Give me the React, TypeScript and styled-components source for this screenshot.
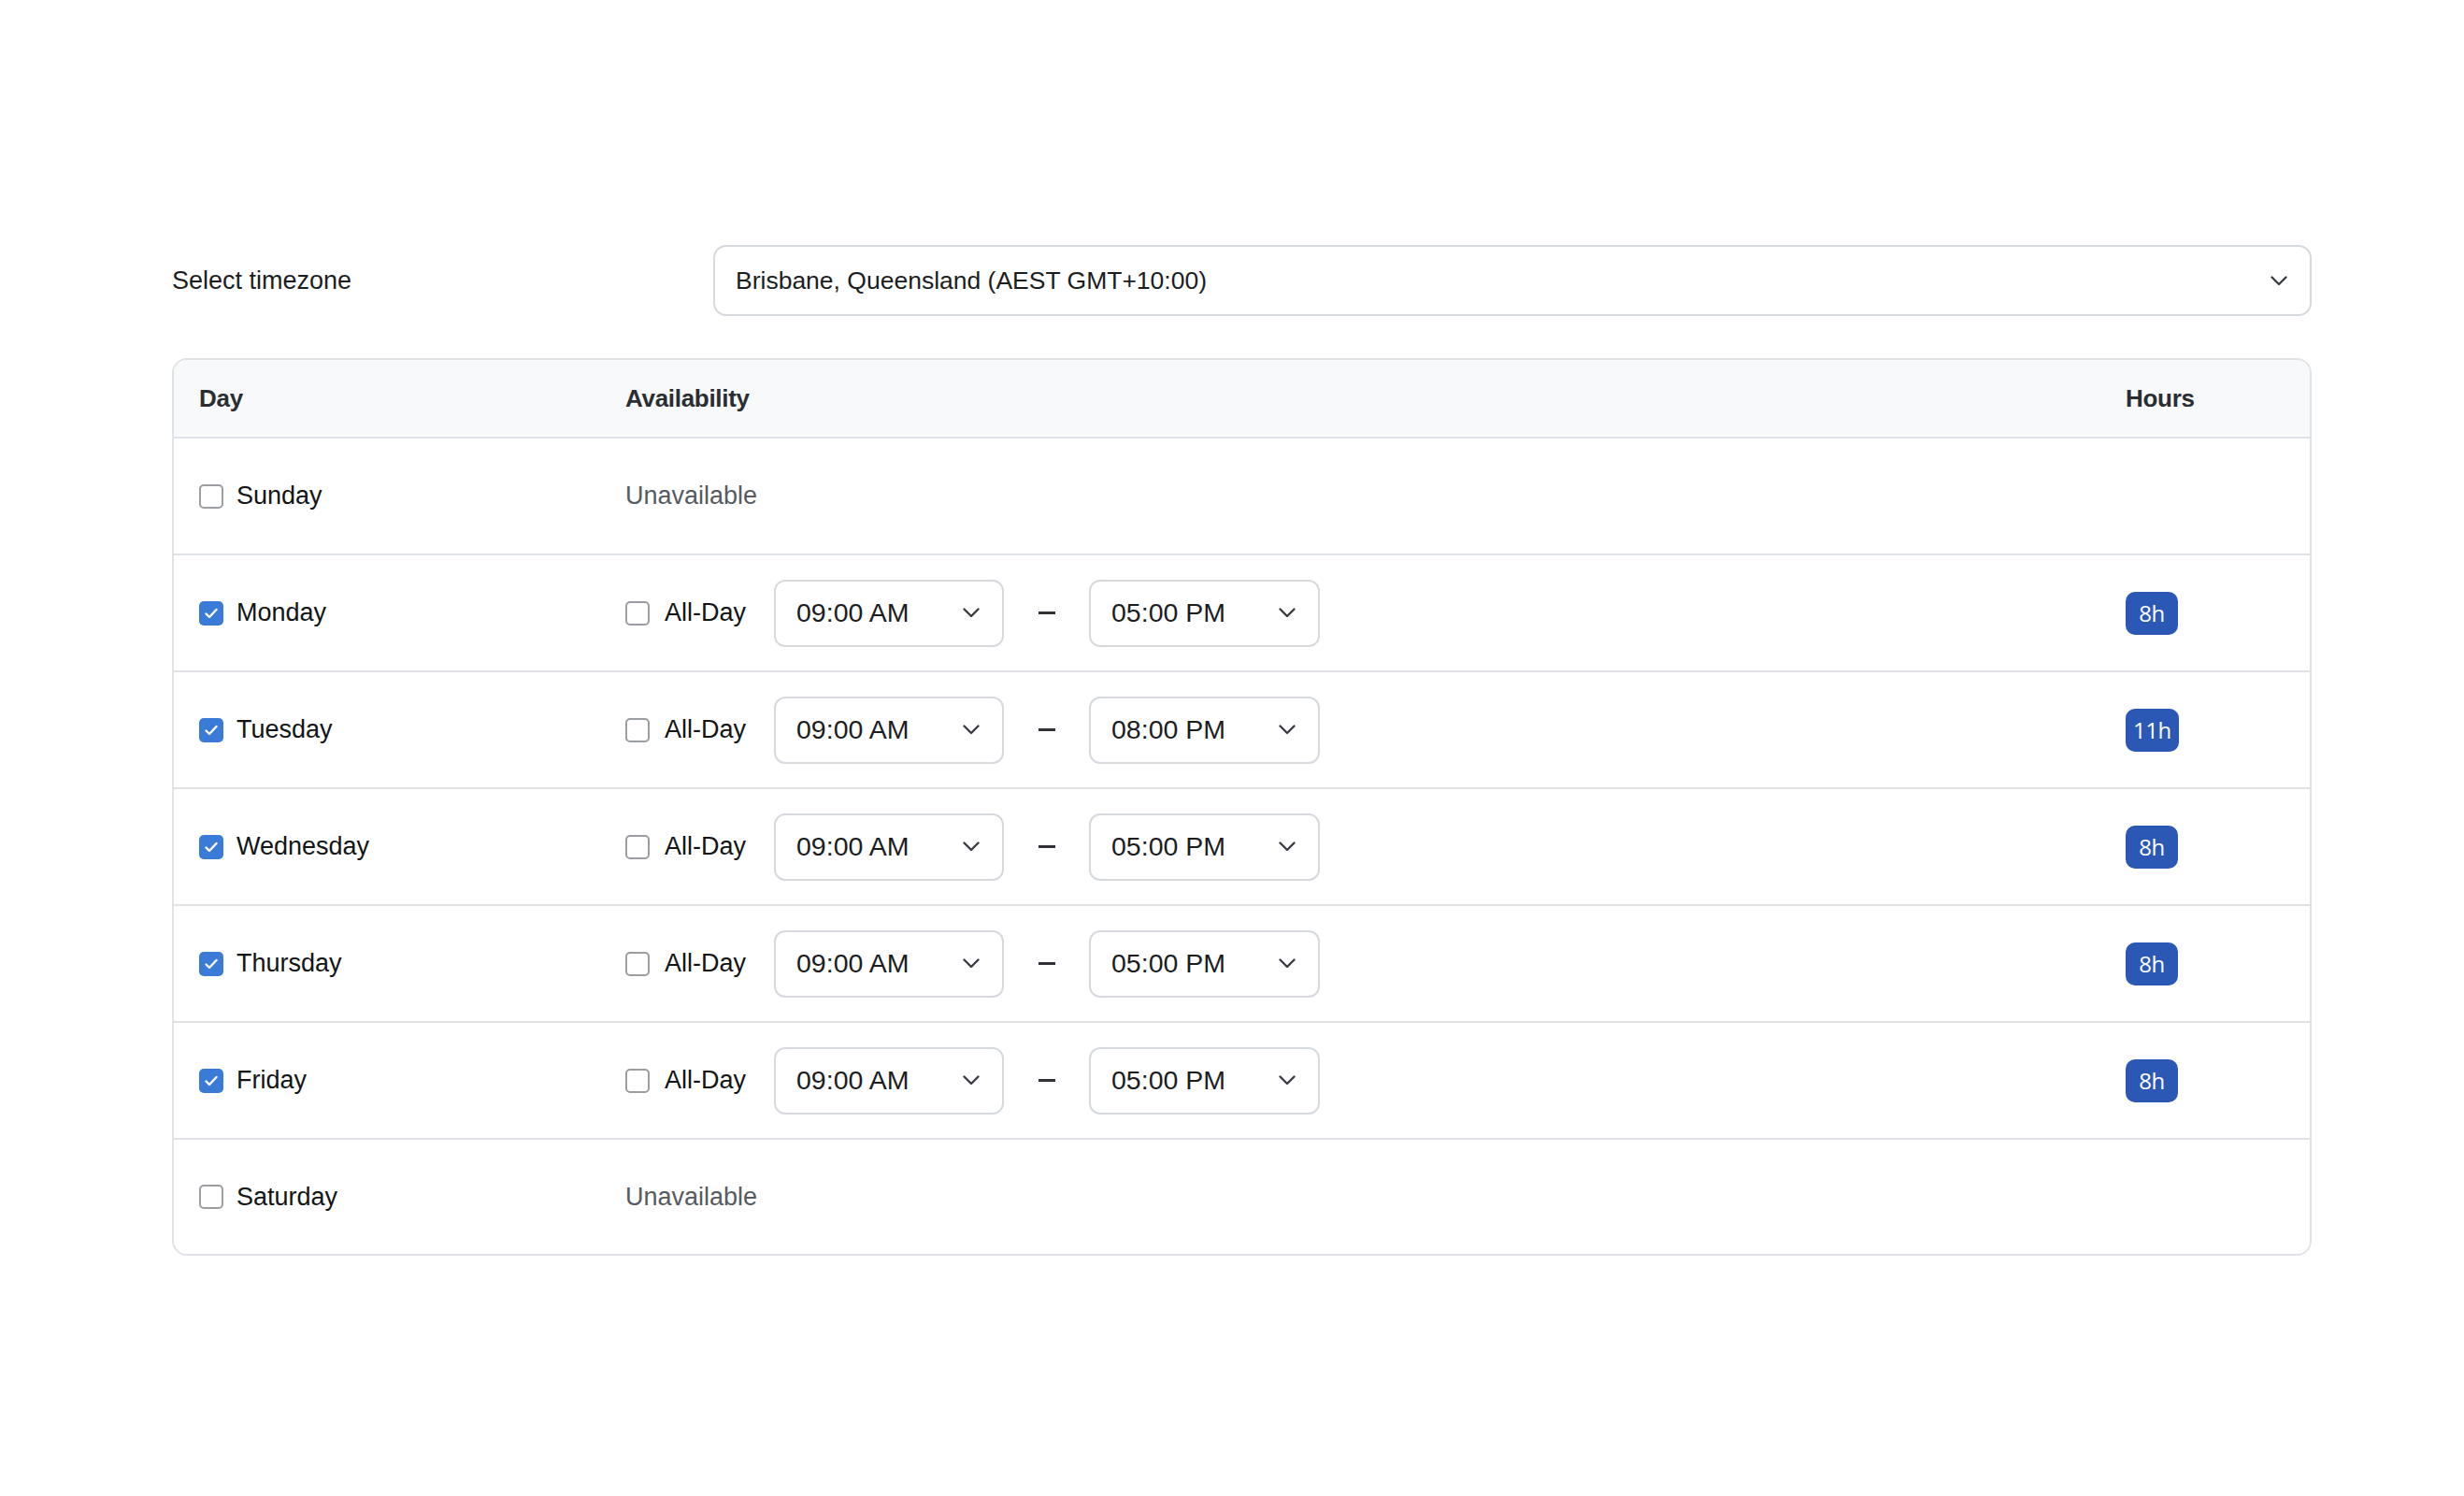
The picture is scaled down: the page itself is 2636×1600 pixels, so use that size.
import React from "react";
import styled, { createGlobalStyle } from "styled-components";

const GlobalStyle = createGlobalStyle`
  html, body {
    margin: 0;
    padding: 0;
    background: #ffffff;
    font-family: "Liberation Sans", Arial, sans-serif;
    color: #1b1d1f;
  }
  * { box-sizing: border-box; }
`;

const Page = styled.div`
  width: 2636px;
  min-height: 1600px;
  padding: 262px 0 0 184px;
`;

const Content = styled.div`
  width: 2289px;
  display: flex;
  flex-direction: column;
  gap: 45px;
`;

const TimezoneRow = styled.div`
  display: grid;
  grid-template-columns: 579px 1fr;
  align-items: center;
`;

const FieldLabel = styled.label`
  font-size: 27px;
  color: #1b1d1f;
`;

const SelectBox = styled.div<{ $width?: number; $height: number; $radius: number; $size: number }>`
  display: flex;
  align-items: center;
  justify-content: space-between;
  width: ${(p) => (p.$width ? `${p.$width}px` : "100%")};
  height: ${(p) => p.$height}px;
  border: 2px solid #d6d9dd;
  border-radius: ${(p) => p.$radius}px;
  background: #fff;
  padding: 0 24px 0 22px;
  font-size: ${(p) => p.$size}px;
  color: #1b1d1f;
  flex-shrink: 0;
`;

const Chevron = () => (
  <svg width="18" height="11" viewBox="0 0 18 11" fill="none">
    <polyline
      points="1.5,1.5 9,9 16.5,1.5"
      stroke="#3a3e44"
      strokeWidth="2.4"
      strokeLinecap="round"
      strokeLinejoin="round"
    />
  </svg>
);

const Card = styled.div`
  border: 2px solid #dfe2e6;
  border-radius: 16px;
  overflow: hidden;
  background: #fff;
`;

const Row = styled.div<{ $header?: boolean; $last?: boolean }>`
  display: grid;
  grid-template-columns: 456px 1fr 197px;
  align-items: center;
  padding-left: 27px;
  height: ${(p) => (p.$header ? 84 : p.$last ? 122 : 125)}px;
  background: ${(p) => (p.$header ? "#f8f9fa" : "#ffffff")};
  border-bottom: ${(p) => (p.$last ? "none" : "2px solid #dfe2e6")};
`;

const HeaderCell = styled.div`
  font-size: 26px;
  font-weight: 700;
  color: #2a2d31;
  letter-spacing: -0.3px;
`;

const DayCell = styled.div`
  display: flex;
  align-items: center;
  gap: 14px;
  font-size: 27px;
  color: #121416;
`;

const Box = styled.span<{ $checked?: boolean }>`
  width: 26px;
  height: 26px;
  border-radius: 5px;
  display: inline-flex;
  align-items: center;
  justify-content: center;
  flex-shrink: 0;
  background: ${(p) => (p.$checked ? "#3a7bd8" : "#ffffff")};
  border: ${(p) => (p.$checked ? "none" : "2px solid #9a9ea3")};
`;

const CheckBox = ({ checked }: { checked?: boolean }) => (
  <Box $checked={checked}>
    {checked && (
      <svg width="16" height="14" viewBox="0 0 16 14" fill="none">
        <polyline
          points="2.5,7.5 6,11 13.5,3"
          stroke="#ffffff"
          strokeWidth="2.4"
          strokeLinecap="round"
          strokeLinejoin="round"
        />
      </svg>
    )}
  </Box>
);

const AvailCell = styled.div`
  display: flex;
  align-items: center;
  font-size: 27px;
`;

const AllDay = styled.div`
  display: flex;
  align-items: center;
  gap: 16px;
  margin-right: 30px;
  color: #121416;
`;

const Dash = styled.span`
  width: 18px;
  height: 2.5px;
  background: #2f3236;
  margin: 0 36px 0 37px;
  flex-shrink: 0;
`;

const Unavailable = styled.span`
  color: #565b61;
  font-size: 27px;
`;

const HoursCell = styled.div`
  display: flex;
  align-items: center;
`;

const Badge = styled.span`
  display: inline-flex;
  align-items: center;
  justify-content: center;
  min-width: 56px;
  height: 46px;
  padding: 0 8px;
  border-radius: 10px;
  background: #2c58b5;
  color: #ffffff;
  font-size: 24px;
  font-family: "Open Sans", "Liberation Sans", sans-serif;
  letter-spacing: -0.5px;
`;

type Day = {
  name: string;
  on: boolean;
  start?: string;
  end?: string;
  hours?: string;
};

const days: Day[] = [
  { name: "Sunday", on: false },
  { name: "Monday", on: true, start: "09:00 AM", end: "05:00 PM", hours: "8h" },
  { name: "Tuesday", on: true, start: "09:00 AM", end: "08:00 PM", hours: "11h" },
  { name: "Wednesday", on: true, start: "09:00 AM", end: "05:00 PM", hours: "8h" },
  { name: "Thursday", on: true, start: "09:00 AM", end: "05:00 PM", hours: "8h" },
  { name: "Friday", on: true, start: "09:00 AM", end: "05:00 PM", hours: "8h" },
  { name: "Saturday", on: false },
];

export default function App() {
  return (
    <>
      <GlobalStyle />
      <Page>
        <Content>
          <TimezoneRow>
            <FieldLabel>Select timezone</FieldLabel>
            <SelectBox $height={76} $radius={14} $size={26.5}>
              <span>Brisbane, Queensland (AEST GMT+10:00)</span>
              <Chevron />
            </SelectBox>
          </TimezoneRow>

          <Card>
            <Row $header>
              <HeaderCell>Day</HeaderCell>
              <HeaderCell>Availability</HeaderCell>
              <HeaderCell>Hours</HeaderCell>
            </Row>
            {days.map((d, i) => (
              <Row key={d.name} $last={i === days.length - 1}>
                <DayCell>
                  <CheckBox checked={d.on} />
                  <span>{d.name}</span>
                </DayCell>
                <AvailCell>
                  {d.on ? (
                    <>
                      <AllDay>
                        <CheckBox />
                        <span>All-Day</span>
                      </AllDay>
                      <SelectBox $width={246} $height={72} $radius={12} $size={28.5}>
                        <span>{d.start}</span>
                        <Chevron />
                      </SelectBox>
                      <Dash />
                      <SelectBox $width={247} $height={72} $radius={12} $size={28.5}>
                        <span>{d.end}</span>
                        <Chevron />
                      </SelectBox>
                    </>
                  ) : (
                    <Unavailable>Unavailable</Unavailable>
                  )}
                </AvailCell>
                <HoursCell>{d.hours && <Badge>{d.hours}</Badge>}</HoursCell>
              </Row>
            ))}
          </Card>
        </Content>
      </Page>
    </>
  );
}
